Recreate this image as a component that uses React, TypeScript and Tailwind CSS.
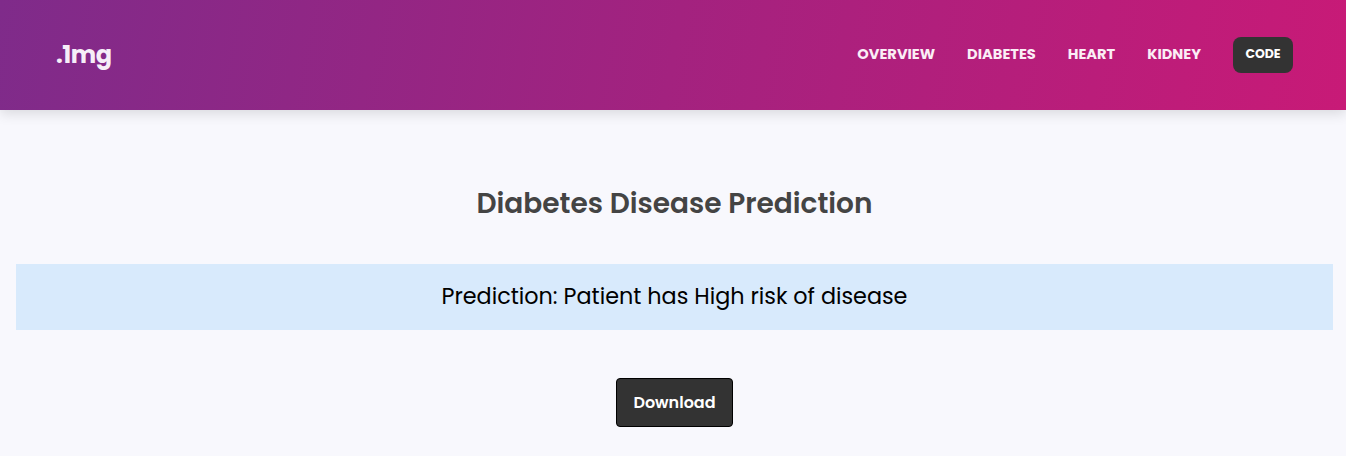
export default function App() {
  const font = { fontFamily: "Poppins, 'Open Sans', 'Noto Sans', sans-serif" };
  return (
    <div className="min-h-[456px] bg-[#f8f8fd]" style={font}>
      <header className="relative z-10 flex h-[110px] items-center justify-between bg-[linear-gradient(100deg,#7f2b8a_0%,#a3227f_50%,#c81a77_100%)] pl-[56px] pr-[53px] shadow-[0_4px_12px_rgba(0,0,0,0.12)]">
        <div className="text-[24px] font-bold tracking-[-0.5px] text-[#f6eef8]">.1mg</div>
        <nav className="flex items-center pb-[1px]">
          <a className="text-[14.6px] font-bold text-[#fbeef6]">OVERVIEW</a>
          <a className="ml-[32px] text-[14.6px] font-bold text-[#fbeef6]">DIABETES</a>
          <a className="ml-[32px] text-[14.6px] font-bold text-[#fbeef6]">HEART</a>
          <a className="ml-[32px] text-[14.6px] font-bold text-[#fbeef6]">KIDNEY</a>
          <button className="ml-[32px] flex h-[36px] w-[60px] items-center justify-center rounded-[8px] bg-[#333333] text-[12.5px] font-bold text-white">CODE</button>
        </nav>
      </header>
      <main className="flex flex-col items-center pl-[16px] pr-[13px] pt-[76px]">
        <h1 className="text-[28px] font-semibold leading-[36px] text-[#444444]">Diabetes Disease Prediction</h1>
        <div className="mt-[42px] flex h-[66px] w-full items-center justify-center bg-[#d8eafc] text-[22.3px] text-black">
          Prediction: Patient has High risk of disease
        </div>
        <button className="mt-[48px] flex h-[49px] w-[117px] items-center justify-center rounded-[4px] border border-black bg-[#333333] text-[16px] font-semibold text-white">
          Download
        </button>
      </main>
    </div>
  );
}
